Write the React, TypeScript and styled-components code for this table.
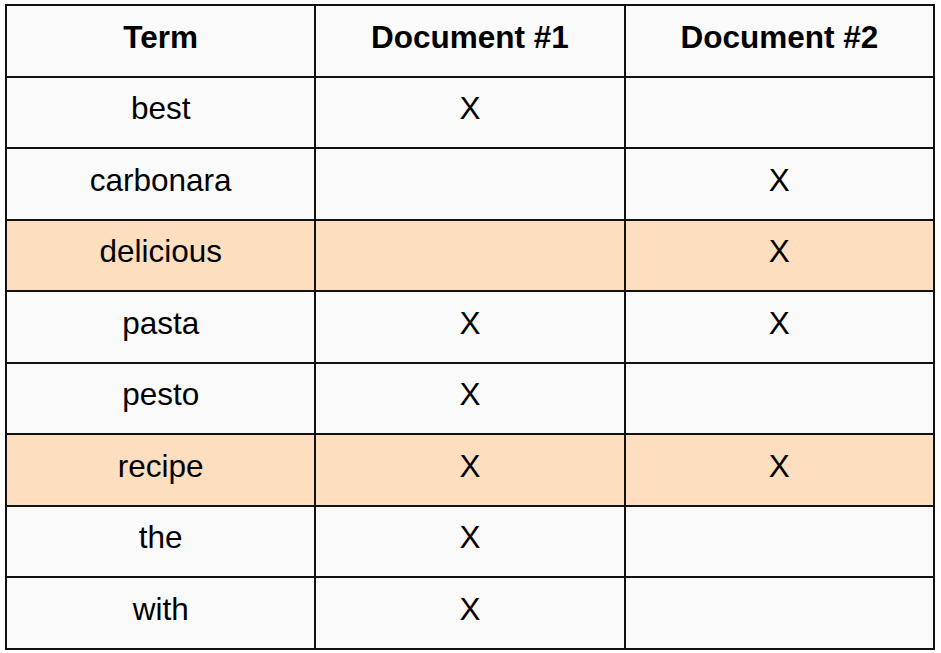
import React from "react";
import styled, { createGlobalStyle } from "styled-components";

const Global = createGlobalStyle`
  html, body { margin: 0; padding: 0; background: #ffffff; }
  body { font-family: "Liberation Sans", Arial, sans-serif; }
`;

const Page = styled.div`
  padding: 4px 0 0 5px;
`;

const Table = styled.table`
  border-collapse: collapse;
  table-layout: fixed;
  width: 930px;
  color: #000;
  font-size: 31.5px;
`;

const Row = styled.tr<{ $hl?: boolean }>`
  height: 71.5px;
  background: ${(p) => (p.$hl ? "#fddfbf" : "#fafafa")};
`;

const Head = styled.th`
  border: 2px solid #111;
  font-weight: 700;
  text-align: center;
  vertical-align: middle;
  padding: 0 0 7px;
`;

const Cell = styled.td`
  border: 2px solid #111;
  text-align: center;
  vertical-align: middle;
  padding: 0 0 7px;
`;

const rows: [string, boolean, boolean, boolean][] = [
  ["best", true, false, false],
  ["carbonara", false, true, false],
  ["delicious", false, true, true],
  ["pasta", true, true, false],
  ["pesto", true, false, false],
  ["recipe", true, true, true],
  ["the", true, false, false],
  ["with", true, false, false],
];

export default function App() {
  return (
    <Page>
      <Global />
      <Table>
        <thead>
          <Row>
            <Head>Term</Head>
            <Head>Document #1</Head>
            <Head>Document #2</Head>
          </Row>
        </thead>
        <tbody>
          {rows.map(([t, a, b, hl]) => (
            <Row key={t} $hl={hl}>
              <Cell>{t}</Cell>
              <Cell>{a ? "X" : ""}</Cell>
              <Cell>{b ? "X" : ""}</Cell>
            </Row>
          ))}
        </tbody>
      </Table>
    </Page>
  );
}
